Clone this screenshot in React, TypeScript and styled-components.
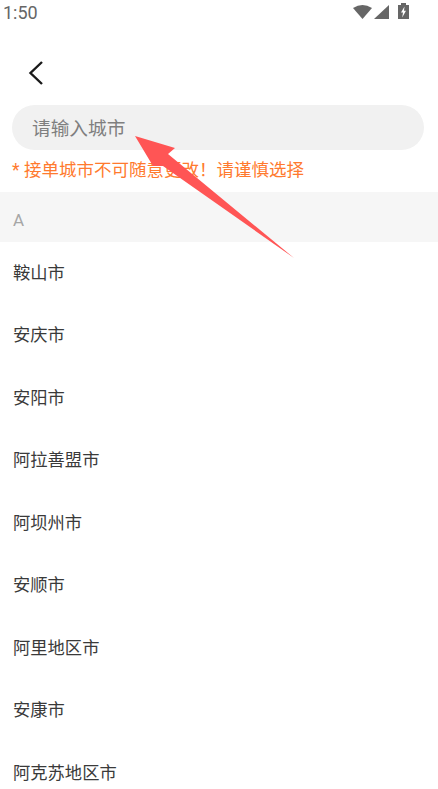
import { createGlobalStyle, styled } from "styled-components";

const cities = ["鞍山市", "安庆市", "安阳市", "阿拉善盟市", "阿坝州市", "安顺市", "阿里地区市", "安康市", "阿克苏地区市"];

const GlobalStyle = createGlobalStyle`
  html, body {
    margin: 0;
    padding: 0;
    background: #fff;
    overflow: hidden;
  }
  body {
    font-family: Roboto, "Noto Sans CJK SC", sans-serif;
  }
`;

const Screen = styled.div`
  position: relative;
  width: 438px;
  height: 789px;
  overflow: hidden;
  background: #fff;
`;

const StatusBar = styled.div`
  height: 26px;
  padding: 0 26px 0 3px;
  display: flex;
  align-items: center;
  justify-content: space-between;
  box-sizing: border-box;
`;

const Clock = styled.span`
  font-size: 18px;
  color: #666;
  line-height: 26px;
`;

const NavBar = styled.div`
  height: 78px;
  padding-left: 28px;
  display: flex;
  align-items: center;
  box-sizing: border-box;
  padding-top: 16px;
`;

const SearchBox = styled.div`
  margin: 1px 14px 0 12px;
  height: 45px;
  border-radius: 23px;
  background: #f1f1f1;
  padding-left: 20px;
  padding-bottom: 2px;
  box-sizing: border-box;
  display: flex;
  align-items: center;
  font-size: 18.7px;
  color: #7f7f7f;
`;

const Notice = styled.div`
  margin: 7px 0 0 12px;
  height: 26px;
  line-height: 26px;
  font-size: 17.5px;
  color: #ff7a2e;
`;

const GroupHeader = styled.div`
  margin-top: 9px;
  height: 50px;
  padding: 5px 0 0 13px;
  box-sizing: border-box;
  display: flex;
  align-items: center;
  background: #f6f6f6;
  color: #a6a6a6;
  font-size: 17px;
`;

const CityList = styled.div`
  margin-top: -2px;
`;

const CityRow = styled.div`
  height: 62.5px;
  padding-left: 13px;
  display: flex;
  align-items: center;
  font-size: 17.3px;
  color: #3a3a3a;
`;

const Arrow = styled.svg`
  position: absolute;
  left: 130px;
  top: 130px;
  width: 170px;
  height: 135px;
`;

export default function App() {
  return (
    <Screen>
      <GlobalStyle />
      <StatusBar>
        <Clock>1:50</Clock>
        <svg width="60" height="20" viewBox="0 0 60 20">
          <path d="M1 5 Q10.5 -1 20 5 L10.5 16 Z" fill="#666" />
          <path d="M22 16 L37 2 V16 Z" fill="#666" />
          <path d="M46 2 H49 V0 H54 V2 H57 V16 H46 Z" fill="#666" />
          <path d="M52.5 3.5 L49 9.5 H51 L50.2 14.5 L54 7.8 H52 Z" fill="#fff" />
        </svg>
      </StatusBar>
      <NavBar>
        <svg width="16" height="26" viewBox="0 0 16 26">
          <path d="M14 2 L2.5 13 L14 24" fill="none" stroke="#1a1a1a" strokeWidth="2.4" />
        </svg>
      </NavBar>
      <SearchBox>请输入城市</SearchBox>
      <Notice>* 接单城市不可随意更改！请谨慎选择</Notice>
      <GroupHeader>A</GroupHeader>
      <CityList>
        {cities.map((city) => (
          <CityRow key={city}>{city}</CityRow>
        ))}
      </CityList>
      <Arrow viewBox="0 0 170 135">
        <path d="M5 6 L45 18 L38 24 L164 128 L33 36 L23 36 Z" fill="#ff5555" />
      </Arrow>
    </Screen>
  );
}
